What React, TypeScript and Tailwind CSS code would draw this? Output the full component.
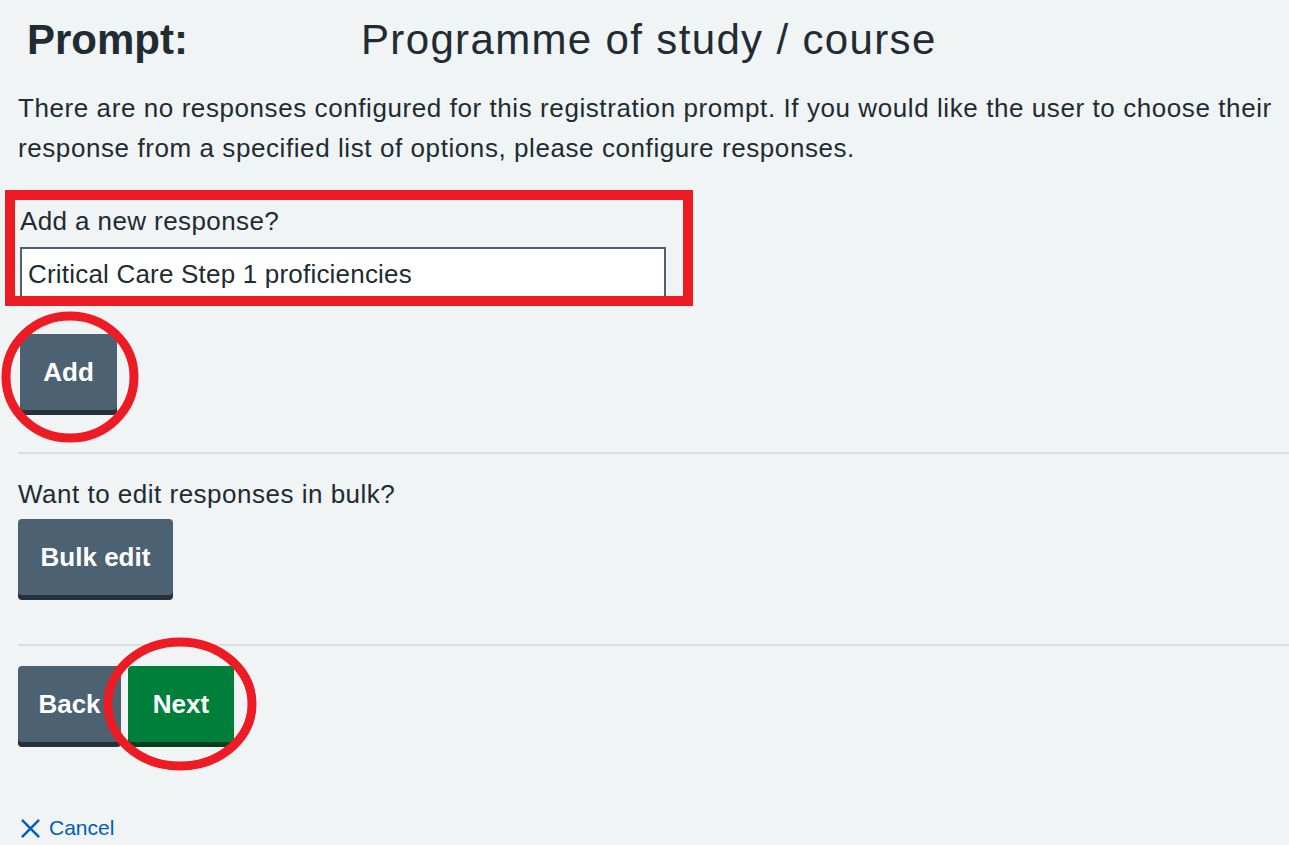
export default function App() {
  return (
    <div
      className="relative min-h-screen w-full overflow-hidden bg-[#f0f4f5] text-[#212b32]"
      style={{ fontFamily: '"Liberation Sans", Arial, sans-serif' }}
    >
      {/* Page */}
      <div className="pl-[18px]">
        {/* Heading */}
        <div className="flex h-[80px] items-center text-[42px] leading-none">
          <span className="ml-[9px] w-[334px] font-bold">Prompt:</span>
          <span className="tracking-[1.35px]">Programme of study / course</span>
        </div>

        <p className="mt-[8px] text-[26px] leading-[40px] tracking-[0.58px]">
          There are no responses configured for this registration prompt. If you would like the user to choose their
          response from a specified list of options, please configure responses.
        </p>

        {/* New response */}
        <div className="mt-[33px] pl-[2px]">
          <label className="block text-[26px] leading-[40px] tracking-[0.4px]">Add a new response?</label>
          <div className="mt-[6px] h-[58px] w-[646px] border-2 border-[#4c6272] bg-white px-[6px] text-[26px] leading-[50px] tracking-[0.2px] text-[#212b32]">
            Critical Care Step 1 proficiencies
          </div>
        </div>

        <button className="ml-[2px] mt-[29px] h-[76px] w-[97px] rounded-[4px] bg-[#4c6272] text-[26px] font-bold text-white shadow-[0_5px_0_#263139]">
          Add
        </button>

        <hr className="mt-[42px] border-0 border-t-2 border-[#d8dde0]" />

        {/* Bulk edit */}
        <p className="mt-[20px] text-[26px] leading-[40px] tracking-[0.5px]">Want to edit responses in bulk?</p>
        <button className="mt-[5px] h-[76px] w-[155px] rounded-[4px] bg-[#4c6272] text-[26px] font-bold text-white shadow-[0_5px_0_#263139]">
          Bulk edit
        </button>

        <hr className="mt-[49px] border-0 border-t-2 border-[#d8dde0]" />

        {/* Actions */}
        <div className="mt-[20px] flex gap-[7px]">
          <button className="h-[76px] w-[103px] rounded-[4px] bg-[#4c6272] text-[26px] font-bold text-white shadow-[0_5px_0_#263139]">
            Back
          </button>
          <button className="h-[76px] w-[106px] rounded-[4px] bg-[#007f3b] text-[26px] font-bold text-white shadow-[0_5px_0_#00401e]">
            Next
          </button>
        </div>

        <a className="mt-[72px] flex items-center gap-[8px] pl-[2px] text-[21px] leading-[28px] text-[#005eb8]">
          <svg width="21" height="21" viewBox="0 0 22 22" fill="none" stroke="#005eb8" strokeWidth="2.6">
            <path d="M2 2 L20 20 M20 2 L2 20" />
          </svg>
          Cancel
        </a>
      </div>

      {/* Annotations */}
      <div className="pointer-events-none absolute left-[5px] top-[190px] h-[116px] w-[688px] border-[10px] border-[#ed1c24]" />
      <svg className="pointer-events-none absolute left-0 top-[310px]" width="142" height="136" viewBox="0 0 142 136">
        <ellipse cx="70" cy="67" rx="64" ry="61" fill="none" stroke="#ed1c24" strokeWidth="9" />
      </svg>
      <svg className="pointer-events-none absolute left-[102px] top-[636px]" width="158" height="138" viewBox="0 0 158 138">
        <ellipse cx="78" cy="68" rx="72" ry="62" fill="none" stroke="#ed1c24" strokeWidth="9" />
      </svg>
    </div>
  );
}
